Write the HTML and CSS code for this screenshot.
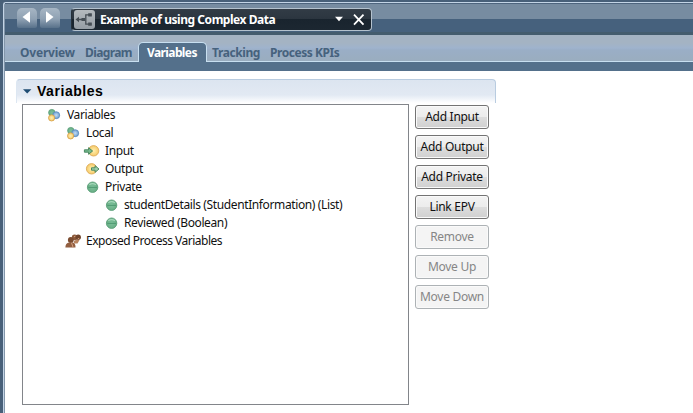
FILE: index.html
```html
<!DOCTYPE html>
<html lang="en">
<head>
<meta charset="utf-8">
<title>Variables</title>
<link rel="stylesheet" href="styles.css">
</head>
<body>
<svg width="0" height="0" class="defs">
  <defs>
    <radialGradient id="green"><stop offset="0" stop-color="#7cc09b"/><stop offset="1" stop-color="#69ae85"/></radialGradient>
    <radialGradient id="gold"><stop offset="0" stop-color="#fff0b0"/><stop offset="1" stop-color="#f6ca69"/></radialGradient>
    <radialGradient id="blue"><stop offset="0" stop-color="#c3dcf3"/><stop offset="1" stop-color="#6c9ed0"/></radialGradient>
    <symbol id="group" viewBox="0 0 14 14">
      <circle cx="3.8" cy="4.6" r="3.2" fill="url(#green)" stroke="#5a9e78" stroke-width=".8"/>
      <circle cx="8.2" cy="7.2" r="3.5" fill="url(#blue)" stroke="#5d8cbc" stroke-width=".8"/>
      <circle cx="3.6" cy="9.9" r="3.1" fill="url(#gold)" stroke="#d3a04c" stroke-width=".8"/>
    </symbol>
    <symbol id="input" viewBox="0 0 14 14">
      <circle cx="7.6" cy="6.8" r="5.2" fill="url(#gold)" stroke="#dcab5a" stroke-width=".9"/>
      <path d="M-1.6 5.8h4.2V3.7L6.6 7l-4 3.3V8.2h-4.2z" fill="#75b88b" stroke="#3e8059" stroke-width=".9"/>
    </symbol>
    <symbol id="output" viewBox="0 0 14 14">
      <circle cx="5.6" cy="6.8" r="5.2" fill="url(#gold)" stroke="#dcab5a" stroke-width=".9"/>
      <path d="M5.5 5.8h3.6V3.7L13 7l-3.9 3.3V8.2H5.5z" fill="#9ccfaa" stroke="#3e8059" stroke-width=".9"/>
    </symbol>
    <symbol id="private" viewBox="0 0 14 14">
      <circle cx="6.6" cy="7.2" r="5.2" fill="url(#green)" stroke="#5a9e78" stroke-width=".9"/>
      <path d="M3.3 4.7q3.2-2 6.6 0" fill="none" stroke="#a5d8ba" stroke-width="1.3"/>
      <path d="M2.2 7.4h8.8" stroke="#4f9a71"/>
    </symbol>
    <symbol id="people" viewBox="0 0 17 14">
      <circle cx="9.6" cy="3.4" r="2.8" fill="#8c5b3c"/>
      <circle cx="13.2" cy="3.2" r="2.7" fill="#70452c"/>
      <path d="M9 7q3-2 5.5-1l-2 3.5H9z" fill="#b98560"/>
      <circle cx="5.8" cy="6" r="2.9" fill="#7b4c30"/>
      <path d="M.4 13.4q0-4.2 3.7-4.9l4 .1q2.5 1 2.4 4.8z" fill="#925f41"/>
      <path d="M6.5 8.8l1.6 4.5M9 2.8l1.4-.6M12.8 4.8l1.4-.4" stroke="#d6a17e"/>
    </symbol>
  </defs>
</svg>
<div class="window">
  <header class="toolbar">
    <div class="nav"><svg viewBox="0 0 20 19"><path d="M13 3.2v11.6L5.5 9z"/></svg></div>
    <div class="nav"><svg viewBox="0 0 20 19"><path d="M6 3.2v11.6L13.5 9z"/></svg></div>
    <div class="picker">
      <span class="process"><svg viewBox="0 0 20 19"><path d="M3 9.5h6M17.5 4.8h-5.7v9.4h5.7" fill="none" stroke="#454d54" stroke-width="1.3"/><path d="M1.5 9.5L5 6.7v5.6zM14.2 3.2h3.6v3.2h-3.6zM14.2 12.6h3.6v3.2h-3.6zM7.5 8h3.6v3H7.5z" fill="#454d54"/></svg></span>
      <span class="title">Example of using Complex Data</span>
      <svg class="tools" viewBox="0 0 32 19"><path d="M1 6.8h8L5 11.3z" fill="#fff"/><path d="M20 4.6l9.5 10M29.5 4.6l-9.5 10" stroke="#fff" stroke-width="1.8"/></svg>
    </div>
  </header>
  <nav class="tabs">
    <a class="tab overview">Overview</a><a class="tab diagram">Diagram</a><a class="tab active">Variables</a><a class="tab tracking">Tracking</a><a class="tab kpis">Process KPIs</a>
  </nav>
  <div class="band"></div>
  <main class="content">
    <section class="section">
      <h2 class="heading"><svg viewBox="0 0 9 5"><path d="M0 .3h8.4L4.2 4.6z" fill="#1f4d73"/></svg><span>Variables</span></h2>
      <div class="body">
        <div class="tree">
          <div class="row"><svg class="icon"><use href="#group"/></svg><span>Variables</span></div>
          <div class="row l1"><svg class="icon"><use href="#group"/></svg><span>Local</span></div>
          <div class="row l2"><svg class="icon"><use href="#input"/></svg><span>Input</span></div>
          <div class="row l2"><svg class="icon"><use href="#output"/></svg><span>Output</span></div>
          <div class="row l2"><svg class="icon"><use href="#private"/></svg><span>Private</span></div>
          <div class="row l3"><svg class="icon"><use href="#private"/></svg><span>studentDetails (StudentInformation) (List)</span></div>
          <div class="row l3"><svg class="icon"><use href="#private"/></svg><span>Reviewed (Boolean)</span></div>
          <div class="row l1"><svg class="icon people"><use href="#people"/></svg><span class="exposed">Exposed Process Variables</span></div>
        </div>
        <div class="actions">
          <button>Add Input</button><button>Add Output</button><button>Add Private</button><button>Link EPV</button><button disabled>Remove</button><button disabled>Move Up</button><button disabled>Move Down</button>
        </div>
      </div>
    </section>
  </main>
</div>
</body>
</html>
```
FILE: styles.css
```css
* { box-sizing: border-box; }
body {
  margin: 0;
  width: 693px;
  height: 413px;
  overflow: hidden;
  background: #486079;
  padding: 2px 0 0 3px;
  font: 12px/18px "Noto Sans", sans-serif;
  color: #111;
}
.defs { position: absolute; }
symbol { overflow: visible; }
.window {
  height: 411px;
  border: solid #c3d4e6;
  border-width: 1px 0 0 1px;
  border-top-left-radius: 3px;
  background: #8396aa;
  padding-left: 1px;
}
.toolbar {
  display: flex;
  height: 32px;
  padding: 5px 0 0 12px;
  background: linear-gradient(#4e657e 0 1px, #778ca1 1px 16px, #46617d 16px 29px, #445c6e 29px);
}
.nav {
  width: 20px;
  height: 20px;
  margin-right: 3px;
  border-radius: 5px 5px 2px 2px;
  background: linear-gradient(#a7b6c4, #8fa1b3 55%, #58718a);
}
.nav svg { display: block; fill: #fff; }
.picker {
  display: flex;
  width: 301px;
  height: 23px;
  margin-left: 8px;
  border: 1px solid #b4c2ce;
  border-left-color: #26313a;
  border-radius: 4px;
  background: linear-gradient(#323c46, #2b353f 50%, #19242e 50%, #1c2731);
}
.process { width: 21px; height: 19px; margin: 1px 0 0 2px; border-radius: 3px; background: linear-gradient(#b5babe, #959da4); }
.process svg { display: block; width: 20px; height: 19px; }
.title { width: 234px; margin-left: 5px; color: #fff; font-weight: 700; line-height: 22px; letter-spacing: -.46px; white-space: nowrap; }
.tools { width: 32px; height: 19px; margin-top: 1px; }
.tabs {
  display: flex;
  height: 27px;
  padding: 7px 0 0 15px;
  border-bottom: 1px solid #c8dff0;
  background: linear-gradient(#a4b3c3 0 8px, #9fb3cd 13px, #9aaec6 15px, #9aadbf);
  font-weight: 700;
}
.tab { height: 19px; line-height: 22px; color: #46627d; white-space: nowrap; letter-spacing: -.2px; }
.overview { width: 65px; }
.diagram { width: 53px; letter-spacing: -.6px; }
.active {
  width: 69px;
  height: 20px;
  padding-left: 8px;
  border: solid #c8dff0;
  border-width: 1px 1px 0;
  border-radius: 5px 5px 0 0;
  background: #54708b;
  color: #fff;
  line-height: 20px;
  letter-spacing: -.6px;
}
.tracking { width: 58px; margin-left: 5px; letter-spacing: -.4px; }
.kpis { letter-spacing: -.45px; }
.band { height: 9px; background: #54708b; }
.content { height: 342px; padding: 8px 0 0 11px; background: #fff; }
.section { width: 480px; }
.heading {
  display: flex;
  align-items: center;
  height: 24px;
  margin: 0;
  padding: 0 0 1px 6px;
  border-top: 1px solid #b9cce0;
  border-left: 1px solid #dde7f2;
  border-right: 1px solid #b9cce0;
  border-radius: 4px 4px 0 0;
  background: linear-gradient(#dce5f0, #e2e9f3 65%, #fff);
  font: 700 14px/20px "Liberation Sans", sans-serif;
  letter-spacing: .55px;
  color: #000;
}
.heading svg { width: 9px; height: 5px; margin-right: 5px; }
.body { display: flex; padding: 1px 0 0 6px; gap: 6px; }
.tree { width: 387px; height: 301px; border: 1px solid #82858a; padding: 1px 0 0 25px; }
.row { display: flex; height: 18px; align-items: center; white-space: nowrap; letter-spacing: -.38px; }
.exposed { letter-spacing: -.5px; }
.icon { width: 14px; height: 14px; margin-right: 5px; flex: none; overflow: visible; }
.people { width: 17px; margin: 0 4px 0 -2px; }
.l1 { padding-left: 19px; }
.l2 { padding-left: 38px; }
.l3 { padding-left: 57px; }
.actions { display: flex; flex-direction: column; gap: 6px; padding-top: 1px; }
button {
  width: 74px;
  height: 24px;
  padding: 0;
  border: 1px solid #737373;
  border-radius: 3px;
  background: linear-gradient(#f3f3f3, #ececec 50%, #dddddd 50%, #d0d0d0);
  box-shadow: inset 0 0 0 1px #fafafa;
  color: #111;
  font: 12px/20px "Noto Sans", sans-serif;
  letter-spacing: -.28px;
}
button:disabled { background: #f4f4f4; border-color: #adb2b5; color: #868686; }
```
